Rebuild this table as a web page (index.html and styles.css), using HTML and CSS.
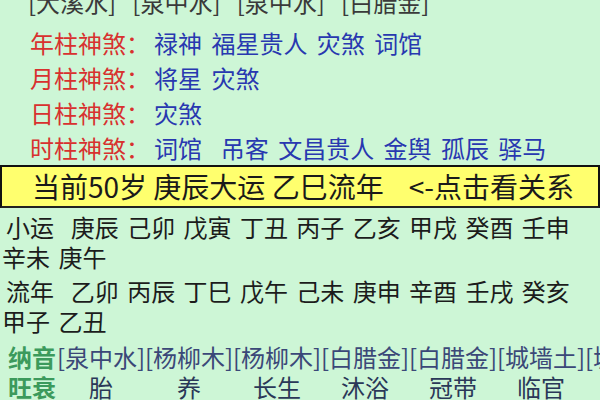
FILE: index.html
```html
<!DOCTYPE html>
<html lang="zh-CN">
<head>
<meta charset="utf-8">
<link rel="stylesheet" href="styles.css">
</head>
<body>
<div class="page">
  <div class="top-nayin">[大溪水]&nbsp;&nbsp;&nbsp;[泉中水]&nbsp;&nbsp;&nbsp;[泉中水]&nbsp;&nbsp;&nbsp;[白腊金]</div>
  <div class="shensha">
    <div class="ss-row"><span class="ss-label">年柱神煞：</span><span class="ss-val">禄神 福星贵人 灾煞 词馆</span></div>
    <div class="ss-row"><span class="ss-label">月柱神煞：</span><span class="ss-val">将星 灾煞</span></div>
    <div class="ss-row"><span class="ss-label">日柱神煞：</span><span class="ss-val">灾煞</span></div>
    <div class="ss-row"><span class="ss-label">时柱神煞：</span><span class="ss-val">词馆&nbsp;&nbsp;吊客 文昌贵人 金舆 孤辰 驿马</span></div>
  </div>
  <div class="dayun-bar">当前50岁 庚辰大运 乙巳流年&nbsp;&nbsp;&nbsp;&nbsp;&lt;-点击看关系</div>
  <div class="yun-block">小运&nbsp;&nbsp;庚辰 己卯 戊寅 丁丑 丙子 乙亥 甲戌 癸酉 壬申 辛未 庚午</div>
  <div class="yun-block">流年&nbsp;&nbsp;乙卯 丙辰 丁巳 戊午 己未 庚申 辛酉 壬戌 癸亥 甲子 乙丑</div>
  <div class="grid">
    <div class="g-label">纳音</div>
    <div class="g-nayin">[泉中水]</div>
    <div class="g-nayin">[杨柳木]</div>
    <div class="g-nayin">[杨柳木]</div>
    <div class="g-nayin">[白腊金]</div>
    <div class="g-nayin">[白腊金]</div>
    <div class="g-nayin">[城墙土]</div>
    <div class="g-nayin">[城墙土]</div>
    <div class="g-label">旺衰</div>
    <div class="g-ws">胎</div>
    <div class="g-ws">养</div>
    <div class="g-ws">长生</div>
    <div class="g-ws">沐浴</div>
    <div class="g-ws">冠带</div>
    <div class="g-ws">临官</div>
    <div class="g-ws">帝旺</div>
  </div>
</div>
</body>
</html>
```

FILE: styles.css
```css
html, body {
  margin: 0;
  padding: 0;
  background: #cdf6d6;
}
.page {
  width: 600px;
  height: 400px;
  overflow: hidden;
  font-family: "Noto Sans CJK SC", "Noto Sans", sans-serif;
  background: #cdf6d6;
}
.top-nayin {
  font-size: 24px;
  line-height: 24px;
  height: 16px;
  overflow: visible;
  margin-top: -10px;
  padding-left: 28px;
  color: #3a3a3a;
  white-space: nowrap;
}
.shensha {
  padding-left: 30px;
  padding-top: 19px;
}
.ss-row {
  font-size: 24px;
  line-height: 35px;
  white-space: nowrap;
  word-spacing: 4px;
}
.ss-label {
  color: #d8312f;
}
.ss-val {
  color: #2838b0;
  margin-left: 4px;
}
.dayun-bar {
  margin-top: 0;
  background: #ffff6e;
  border-top: 2px solid #111;
  border-bottom: 2px solid #222;
  border-left: 2px solid #111;
  border-right: 2px solid #111;
  font-size: 28px;
  line-height: 39px;
  height: 39px;
  padding-left: 30px;
  color: #1a1a1a;
  white-space: nowrap;
}
.yun-block {
  font-size: 24px;
  line-height: 30px;
  color: #1c1c1c;
  padding-left: 2px;
  text-indent: 4px;
  word-break: keep-all;
  word-spacing: 3px;
  margin-top: 4px;
}
.grid {
  display: grid;
  grid-template-columns: 49px repeat(7, 88px);
  padding-left: 8px;
  margin-top: 6px;
  font-size: 24px;
  line-height: 30px;
  white-space: nowrap;
}
.g-label {
  color: #3c9a5c;
  font-weight: bold;
}
.g-nayin {
  color: #3b4878;
}
.g-ws {
  color: #2a3858;
  text-align: center;
}
```
